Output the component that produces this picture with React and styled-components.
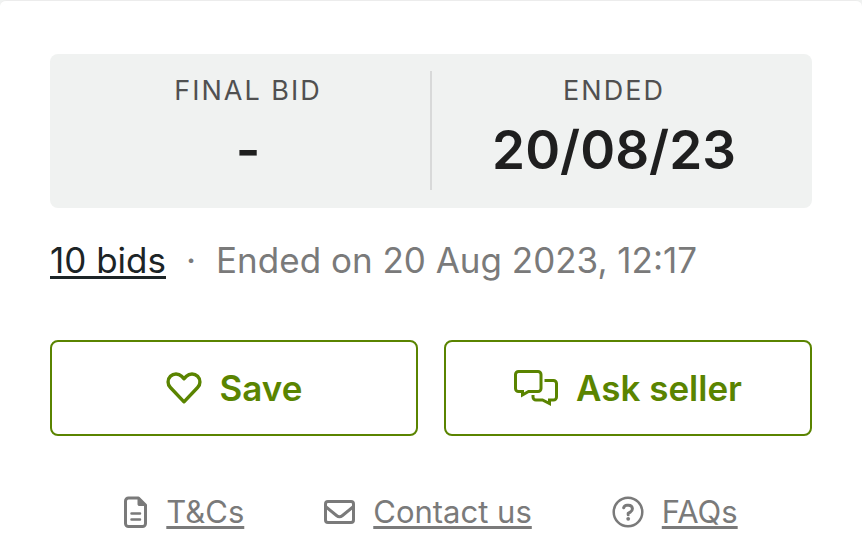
import styled, { createGlobalStyle } from "styled-components";

const GlobalStyle = createGlobalStyle`
  * {
    box-sizing: border-box;
  }

  body {
    margin: 0;
    background: #f0f2f1;
    font-family: Inter, "Liberation Sans", sans-serif;
  }
`;

const Card = styled.main`
  min-height: 100vh;
  padding: 53px 50px 16px;
  border-top: 1px solid #ececec;
  border-radius: 6px 6px 0 0;
  background: #fff;
`;

const Summary = styled.dl`
  display: flex;
  margin: 0;
  padding: 17px 16px 18px;
  border-radius: 8px;
  background: #f0f2f1;
`;

const Stat = styled.div`
  flex: 1;
  text-align: center;

  & + & {
    border-left: 2px solid #d8d9d9;
  }
`;

const StatLabel = styled.dt`
  color: #505050;
  font-size: 27px;
  line-height: 40px;
  letter-spacing: 2px;
  text-transform: uppercase;
`;

const StatValue = styled.dd`
  margin: 0;
  color: #1f1f1f;
  font-size: 53px;
  font-weight: 600;
  line-height: 79px;
`;

const BidInfo = styled.p`
  display: flex;
  flex-wrap: wrap;
  gap: 20px;
  margin: 28px 0 0;
  color: #7a7a7a;
  font-size: 35px;
  line-height: 48px;
`;

const TextLink = styled.a`
  color: ${({ $color }) => $color || "inherit"};
  text-decoration-line: underline;
  text-decoration-thickness: 3px;
  text-underline-offset: 3px;
  text-decoration-skip-ink: none;
`;

const Actions = styled.div`
  display: flex;
  gap: 26px;
  margin-top: 56px;
`;

const Button = styled.button`
  display: flex;
  flex: 1;
  align-items: center;
  justify-content: center;
  gap: 18px;
  height: 96px;
  padding: 0;
  border: 2px solid #5a8400;
  border-radius: 8px;
  background: #fff;
  color: #5a8400;
  font: 600 35px/48px Inter, "Liberation Sans", sans-serif;
  cursor: pointer;
`;

const Links = styled.nav`
  display: flex;
  justify-content: center;
  gap: 80px;
  margin-top: 56px;
  color: #7a7a7a;
  font-size: 31px;
  line-height: 40px;
`;

const LinkItem = styled.span`
  display: flex;
  align-items: center;
  gap: 18px;
  white-space: nowrap;
`;

const Icon = styled.svg`
  flex: none;
  fill: none;
  stroke: currentColor;
  stroke-width: 3;
  stroke-linejoin: round;
  stroke-linecap: round;
`;

const HeartIcon = () => (
  <Icon width="36" height="32" viewBox="0 0 36 32" aria-hidden="true">
    <path
      d="M18 6.700 15.600 4.300C12.500 1.200 7.500 1.200 4.400 4.300s-3.100 8.100 0 11.200L18 29.800l13.600-14.300c3.100-3.100 3.100-8.100 0-11.200s-8.100-3.100-11.200 0L18 6.700Z"
      strokeWidth="3.400"
    />
  </Icon>
);

const ChatIcon = () => (
  <Icon width="44" height="36" viewBox="0 0 44 36" aria-hidden="true">
    <g strokeLinejoin="miter" strokeLinecap="butt">
      <path d="M4.500 1.500H24a3 3 0 0 1 3 3v14a3 3 0 0 1-3 3h-9.500L8.500 25v-3.500h-4a3 3 0 0 1-3-3v-14a3 3 0 0 1 3-3Z" />
      <path d="M30.500 10.500h9a3 3 0 0 1 3 3V27a3 3 0 0 1-3 3h-4v3.500L28.500 30H22a3 3 0 0 1-3-3v-2" />
    </g>
  </Icon>
);

const DocumentIcon = () => (
  <Icon width="24" height="32" viewBox="0 0 24 32" aria-hidden="true">
    <path d="M14.500 2H4.500a3 3 0 0 0-3 3v22.500a3 3 0 0 0 3 3h14a3 3 0 0 0 3-3V9L14.500 2Z" />
    <path
      d="M14 2v6.500a1 1 0 0 0 1 1h7Z"
      fill="currentColor"
      strokeWidth="1"
    />
    <path d="M7.500 17.500h8.500M7.500 23.500h8.500" strokeWidth="2.500" />
  </Icon>
);

const EnvelopeIcon = () => (
  <Icon width="31" height="24" viewBox="0 0 31 24" aria-hidden="true">
    <rect x="1.500" y="1.500" width="28" height="21" rx="2.500" />
    <path d="m1.500 6.500 11 9c1.800 1.500 4.200 1.500 6 0l11-9" />
  </Icon>
);

const QuestionIcon = () => (
  <Icon width="32" height="32" viewBox="0 0 32 32" aria-hidden="true">
    <circle cx="16" cy="16" r="14.300" strokeWidth="2.500" />
    <path d="M11.700 11.700c.5-1.600 1.600-2.500 3.300-2.500h1.500c2.300 0 3.900 1.500 3.900 3.600 0 1.500-.8 2.600-2.100 3.300l-2.100 1.200v1.400" />
    <circle cx="16.200" cy="22.800" r="1.900" fill="currentColor" stroke="none" />
  </Icon>
);

const App = () => {
  return (
    <>
      <GlobalStyle />
      <Card>
        <Summary>
          <Stat>
            <StatLabel>Final bid</StatLabel>
            <StatValue>-</StatValue>
          </Stat>
          <Stat>
            <StatLabel>Ended</StatLabel>
            <StatValue>20/08/23</StatValue>
          </Stat>
        </Summary>
        <BidInfo>
          <TextLink href="#bids" $color="#1c2426">
            10 bids
          </TextLink>
          <span>·</span>
          <span>Ended on 20 Aug 2023, 12:17</span>
        </BidInfo>
        <Actions>
          <Button type="button">
            <HeartIcon />
            Save
          </Button>
          <Button type="button">
            <ChatIcon />
            Ask seller
          </Button>
        </Actions>
        <Links>
          <LinkItem>
            <DocumentIcon />
            <TextLink href="#terms">T&amp;Cs</TextLink>
          </LinkItem>
          <LinkItem>
            <EnvelopeIcon />
            <TextLink href="#contact">Contact us</TextLink>
          </LinkItem>
          <LinkItem>
            <QuestionIcon />
            <TextLink href="#faqs">FAQs</TextLink>
          </LinkItem>
        </Links>
      </Card>
    </>
  );
};

export default App;
